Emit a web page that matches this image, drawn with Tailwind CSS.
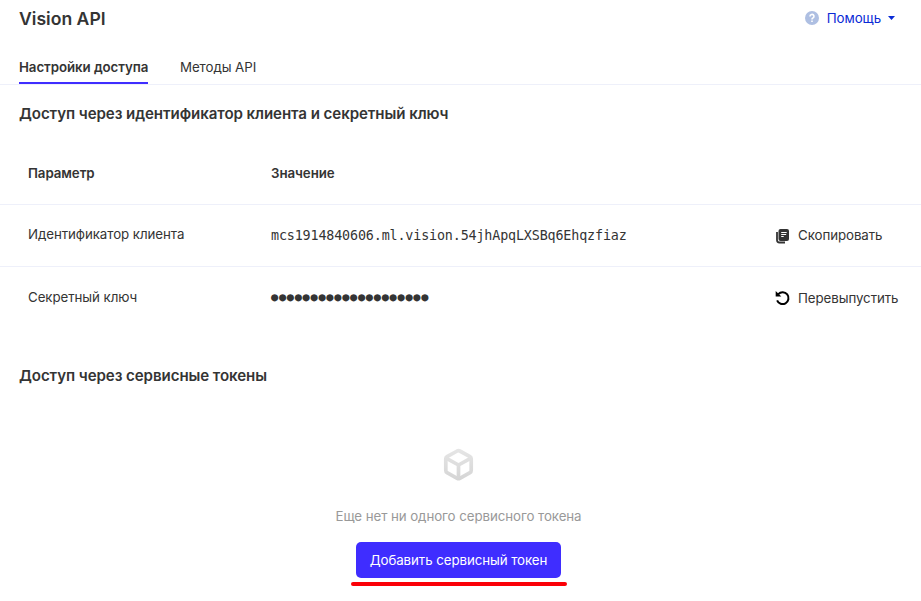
<!DOCTYPE html>
<html lang="ru"><head><meta charset="utf-8"><title>Vision API</title>
<script src="https://cdn.jsdelivr.net/npm/@tailwindcss/browser@4"></script></head>
<body class="bg-white text-[#343434] font-['Inter',sans-serif] text-[13.3px] leading-5 tracking-[-0.07px] w-[921px] h-[601px] overflow-hidden">
<header class="flex justify-between pl-[19px] pr-[26px] h-[50px] pt-2">
<h1 class="text-[17.6px] font-semibold tracking-normal pt-px"><span>Vision API</span></h1>
<a class="flex h-5 items-center text-[#0a2bd6]"><svg class="w-[14px] h-[14px] mr-2" viewBox="0 0 14 14"><circle cx="7" cy="7" r="7" fill="#aebfe2"/><path d="M5 5.500a2 1.900 0 1 1 2.900 1.500Q7 7.400 7 8.400M7 9.400v1.500" fill="none" stroke="#fff" stroke-width="1.600"/></svg><span>Помощь</span><svg class="w-[7px] h-1 ml-[7px]" viewBox="0 0 7 4"><path d="M0 0h7L3.500 4z" fill="#0a2bd6"/></svg></a>
</header>
<nav class="flex gap-8 pl-[19px] h-[35px] border-b border-[#eef0fa]"><b class="font-semibold pt-[7px] h-[34px] border-b-2 border-[#3f2dff] w-[129px] whitespace-nowrap"><span>Настройки доступа</span></b><span class="pt-[7px]">Методы API</span></nav>
<h2 class="text-[15.1px] font-semibold tracking-[-0.08px] pl-[19px] pt-[19px] h-[58px]"><span>Доступ через идентификатор клиента и секретный ключ</span></h2>
<section>
<div class="grid grid-cols-[243px_504px_1fr] pl-7 h-[62px] pt-5 font-semibold border-b border-[#eef0fa]"><span>Параметр</span><span>Значение</span></div>
<div class="grid grid-cols-[243px_504px_1fr] pl-7 h-[62px] pt-5 border-b border-[#eef0fa]"><span class="-mt-px">Идентификатор клиента</span><span class="font-['DejaVu_Sans_Mono',monospace] text-[13.4px] tracking-[-0.16px] pt-px">mcs1914840606.ml.vision.54jhApqLXSBq6Ehqzfiaz</span>
<button class="flex h-5 items-center gap-2"><svg class="w-[15px] h-4 mt-0.5" viewBox="0 0 15 16"><path d="M2 4v8a2.500 2.500 0 0 0 2.500 2.500H10" fill="none" stroke="#343434" stroke-width="1.800"/><rect x="3.500" y="1" width="10.500" height="12" rx="2" fill="#343434"/><path d="M6.200 4.500h5.500M6.200 6.500h5M6.200 8.500h2.500" stroke="#fff" stroke-width="1"/></svg><span>Скопировать</span></button></div>
<div class="grid grid-cols-[243px_504px_1fr] pl-7 h-[62px] pt-5"><span>Секретный ключ</span><span class="font-['DejaVu_Sans_Mono',monospace] text-[12px] tracking-[0.68px]">●●●●●●●●●●●●●●●●●●●●</span>
<button class="flex h-5 items-center gap-2 mt-px"><svg class="w-[15px] h-4" viewBox="0 0 15 16"><path d="M3.300 4.100A5.900 5.900 0 1 1 2.100 10.300" fill="none" stroke="#000" stroke-width="2"/><path d="M.7 1v5.400h5.600z" fill="#000"/></svg><span>Перевыпустить</span></button></div>
</section>
<h2 class="text-[15.1px] font-semibold tracking-[-0.08px] pl-[19px] pt-[37px] h-[119px]"><span>Доступ через сервисные токены</span></h2>
<div class="flex flex-col items-center pr-1"><svg class="w-[31px] h-[34px] mb-6" viewBox="0 0 31 34"><defs><linearGradient id="g" gradientUnits="userSpaceOnUse" x1="0" y1="0" x2="0" y2="34"><stop stop-color="#e6e6e6"/><stop offset="1" stop-color="#d4d4d4"/></linearGradient></defs><g fill="none" stroke="url(#g)" stroke-width="3.700" stroke-linejoin="round"><path d="M14.200 3q1.300-.7 2.600 0l10.200 5.700q1.200.7 1.200 2v11.800q0 1.400-1.200 2.100l-10.200 5.800q-1.300.7-2.600 0L4 24.600q-1.200-.7-1.200-2.100V10.700q0-1.300 1.200-2z"/><path d="M3.500 10.300l12 6.700 12-6.700M15.500 17v13.500"/></g></svg><span class="text-[#999]">Еще нет ни одного сервисного токена</span><button class="relative mt-4 w-[205px] h-9 rounded-[5px] bg-[#3f2dff] text-white"><span>Добавить сервисный токен</span><i class="absolute left-[-5px] top-10 w-[216px] h-1 rounded-full bg-[#fb0007]"></i></button></div>
</body></html>
